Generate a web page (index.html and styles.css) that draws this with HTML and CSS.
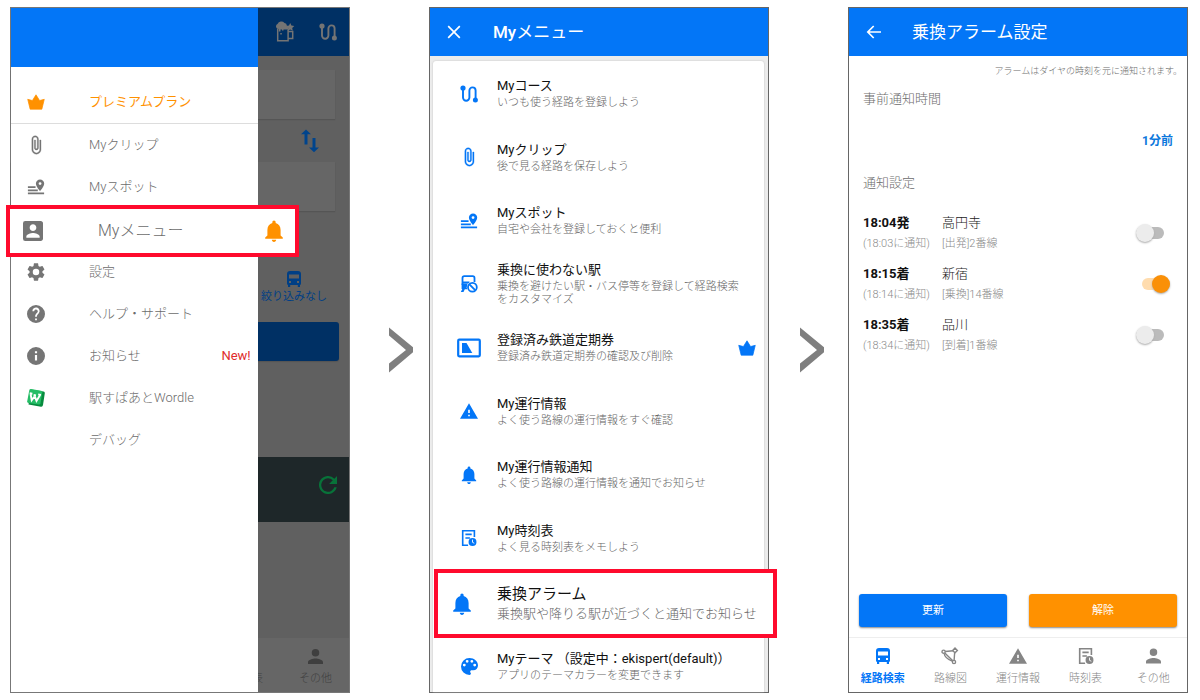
FILE: index.html
```html
<!DOCTYPE html>
<html lang="ja">
<head>
<meta charset="utf-8">
<meta name="viewport" content="width=device-width, initial-scale=1">
<title>乗換アラーム設定</title>
<link rel="stylesheet" href="styles.css">
</head>
<body>
<svg class="sprite" aria-hidden="true">
  <symbol id="crown" viewBox="0 0 20 20"><path d="M3.500 18h13l2.700-11-5.200 1.400L10 2 6 8.400.8 7z" stroke="currentColor" stroke-width=".8" stroke-linejoin="round"/></symbol>
  <symbol id="clip" viewBox="0 0 24 24"><path stroke="currentColor" stroke-width=".4" d="M16.500 6v11.500c0 2.210-1.790 4-4 4s-4-1.790-4-4V5c0-1.380 1.120-2.500 2.500-2.500s2.500 1.120 2.500 2.500v10.500c0 .55-.45 1-1 1s-1-.45-1-1V6H10v9.500c0 1.380 1.120 2.500 2.500 2.500s2.500-1.120 2.500-2.500V5c0-2.210-1.790-4-4-4S7 2.790 7 5v12.500c0 3.040 2.460 5.500 5.500 5.500s5.500-2.460 5.500-5.500V6h-1.500z"/></symbol>
  <symbol id="spot" viewBox="0 0 20 18"><path d="M1 15.200h18v1.900H1zM1 11.700h11v1.900H1zM1 8.200h8.500v1.900H1z"/><path fill-rule="evenodd" d="M14.500.6a4.600 4.600 0 0 1 4.600 4.600c0 3.300-4.600 8.500-4.600 8.500s-4.600-5.200-4.600-8.500A4.600 4.600 0 0 1 14.500.6zm0 3a1.600 1.600 0 1 0 0 3.200 1.600 1.600 0 0 0 0-3.200z"/></symbol>
  <symbol id="account" viewBox="3 3 18 18"><path d="M3 5v14a2 2 0 0 0 2 2h14c1.100 0 2-.9 2-2V5c0-1.100-.9-2-2-2H5a2 2 0 0 0-2 2zm12 4c0 1.660-1.340 3-3 3s-3-1.340-3-3 1.340-3 3-3 3 1.340 3 3zm-9 8c0-2 4-3.100 6-3.100s6 1.100 6 3.100v1H6v-1z"/></symbol>
  <symbol id="bell" viewBox="4 2 16 20"><path d="M12 22c1.100 0 2-.9 2-2h-4c0 1.100.89 2 2 2zm6-6v-5c0-3.070-1.640-5.640-4.500-6.320V4c0-.83-.67-1.500-1.500-1.500s-1.500.67-1.500 1.500v.68C7.630 5.360 6 7.920 6 11v5l-2 2v1h16v-1l-2-2z"/></symbol>
  <symbol id="gear" viewBox="2 2 20 20"><path d="M19.140 12.940c.04-.3.06-.61.06-.94s-.02-.64-.07-.94l2.030-1.580c.18-.14.23-.41.12-.61l-1.920-3.320c-.12-.22-.37-.29-.59-.22l-2.390.96c-.5-.38-1.030-.7-1.620-.94L14.400 2.810c-.04-.24-.24-.41-.48-.41h-3.840c-.24 0-.43.17-.47.41l-.36 2.540c-.59.24-1.130.57-1.620.94l-2.390-.96c-.22-.08-.47 0-.59.22L2.740 8.870c-.12.21-.08.47.12.61l2.030 1.580c-.05.3-.09.63-.09.94s.02.64.07.94l-2.030 1.580c-.18.14-.23.41-.12.61l1.920 3.320c.12.22.37.29.59.22l2.390-.96c.5.38 1.030.7 1.620.94l.36 2.540c.05.24.24.41.48.41h3.840c.24 0 .44-.17.47-.41l.36-2.540c.59-.24 1.130-.56 1.620-.94l2.390.96c.22.08.47 0 .59-.22l1.920-3.320c.12-.22.07-.47-.12-.61l-2.010-1.580zM12 15.600A3.600 3.600 0 1 1 12 8.400a3.600 3.600 0 0 1 0 7.200z"/></symbol>
  <symbol id="help" viewBox="2 2 20 20"><path d="M12 2a10 10 0 1 0 0 20 10 10 0 0 0 0-20zm1 17h-2v-2h2v2zm2.070-7.750l-.9.920C13.450 12.900 13 13.500 13 15h-2v-.5c0-1.100.45-2.100 1.170-2.830l1.240-1.260A2 2 0 1 0 10 9H8a4 4 0 1 1 7.070 2.250z"/></symbol>
  <symbol id="info" viewBox="2 2 20 20"><path d="M12 2a10 10 0 1 0 0 20 10 10 0 0 0 0-20zm1.200 15h-2.400v-6h2.400v6zm0-8h-2.400V6.800h2.400V9z"/></symbol>
  <symbol id="wordle" viewBox="0 0 20 20"><path fill="#078b3e" d="M5 1.500l12.500 2q1.500.3 1.300 1.800L17 17q-.4 2-2 1.700L2.500 16.500z"/><path fill="#25bd66" d="M5 1l10 1.700q1.500.3 1.300 1.800l-1.800 10.800q-.3 1.500-1.800 1.300L2.500 15Q1 14.700 1.200 13.200L3.300 2.300Q3.600.8 5 1z"/><path fill="none" stroke="#fff" stroke-width="1.900" d="M4.500 5.500l1.200 6.700 3-4 1.800 4.700 3.600-6M3.700 5.300l2.700.4M12.200 6.400l2.800.5M7.600 7l2.400.4"/></symbol>
  <symbol id="course" viewBox="0 0 18 18"><path fill="none" stroke="currentColor" stroke-width="1.900" d="M3 3v9.500a3.200 3.200 0 0 0 6.400 0v-7a3.100 3.100 0 0 1 6.200 0V15"/><circle cx="3" cy="3" r="2.600"/><circle cx="15.400" cy="15" r="2.500"/></symbol>
  <symbol id="mug" viewBox="0 0 20 22"><path fill="none" stroke="currentColor" stroke-width="1.500" d="M2.700 7.500v12.300h10.400V8.500M13.100 10.600h4.600v7h-4.600"/><path d="M2 7.500A2.700 2.700 0 0 1 2.500 3 4.200 4.200 0 0 1 9.500 2q2.300.3 2.300 2.600l1.200 1v3H8.500v1H7V8.500H5.500v2H3.800V8zM5.300 12h1.500v1.500H5.300z"/><path d="M15.200 2l1.200 2.500 2.900.4-2.100 2 .6 2.800-2.600-1.300-2.500 1.300.5-2.800-2.100-2 2.900-.4z"/></symbol>
  <symbol id="swap" viewBox="0 0 20 24"><path d="M4.500 15.500V5.300H1L6 .5l5 4.800H7.500v10.200zM12.500 9h3v9.500H19l-5 4.800-5-4.800h3.500z"/></symbol>
  <symbol id="bus" viewBox="0 0 16 18"><path fill-rule="evenodd" d="M4 1h8q3 0 3 3v9.500q0 1-1 1.500v2h-2.200v-2H4.200v2H2v-2q-1-.5-1-1.500V4q0-3 3-3zm-1 3.500v4h10v-4zM3 11v2h2v-2zm8 0v2h2v-2z"/></symbol>
  <symbol id="refresh" viewBox="4 4 16 16"><path d="M17.650 6.350A8 8 0 1 0 19.730 14h-2.080A6 6 0 1 1 12 6c1.660 0 3.140.69 4.220 1.780L13 11h7V4l-2.350 2.350z"/></symbol>
  <symbol id="person" viewBox="4 4 16 16"><path d="M12 12a4 4 0 1 0 0-8 4 4 0 0 0 0 8zm0 2c-2.670 0-8 1.340-8 4v2h16v-2c0-2.660-5.330-4-8-4z"/></symbol>
  <symbol id="avoid" viewBox="0 0 18 18"><path fill="none" stroke="currentColor" stroke-width="1.800" d="M2.500 10V3Q2.500 1.200 4.300 1.200h8.400q1.800 0 1.800 1.800V7M2.500 7.500h7"/><path d="M1.600 8.500h6v5.800H4.800L3.500 17H.8l1.500-3H1.600z"/><circle cx="12.400" cy="12.300" r="5.600" fill="#fff"/><circle cx="12.400" cy="12.300" r="4.400" fill="none" stroke="currentColor" stroke-width="1.800"/><path stroke="currentColor" stroke-width="1.800" d="M9.400 9.300l6 6"/></symbol>
  <symbol id="pass" viewBox="0 0 24 20"><rect x="1.200" y="1.700" width="21.600" height="16.600" rx="1" fill="none" stroke="currentColor" stroke-width="2.200"/><path d="M5 5h4.500l5.800 10H5z"/></symbol>
  <symbol id="warning" viewBox="1 2 22 19"><path d="M1 21h22L12 2 1 21zm12-3h-2v-2h2v2zm0-4h-2v-4h2v4z"/></symbol>
  <symbol id="timetable" viewBox="0 0 18 20"><path fill="none" stroke="currentColor" stroke-width="1.800" d="M8 18H2V1.900h13V9M5 6h7M5 10h5"/><circle cx="12.900" cy="14.500" r="4.400"/><path fill="none" stroke="#fff" stroke-width="1" d="M12.900 11.800v3l2 1"/></symbol>
  <symbol id="palette" viewBox="3 3 18 18"><path d="M12 3a9 9 0 0 0 0 18c.83 0 1.500-.67 1.500-1.500 0-.39-.15-.74-.39-1.010-.23-.26-.38-.61-.38-.99 0-.83.67-1.500 1.500-1.500H16a5 5 0 0 0 5-5c0-4.420-4.030-8-9-8zm-5.500 9a1.500 1.500 0 1 1 0-3 1.500 1.500 0 0 1 0 3zm3-4a1.500 1.500 0 1 1 0-3 1.500 1.500 0 0 1 0 3zm5 0a1.500 1.500 0 1 1 0-3 1.500 1.500 0 0 1 0 3zm3 4a1.500 1.500 0 1 1 0-3 1.500 1.500 0 0 1 0 3z"/></symbol>
  <symbol id="map" viewBox="0 0 18 18"><g fill="none" stroke="currentColor" stroke-width="1.400"><path d="M4.200 4.500l8-.8M3.800 6l8 7.800M13.700 5l-.6 8.500"/><circle cx="2.600" cy="4.700" r="1.600"/><path d="M14 1l2.400 2.400L14 5.800l-2.400-2.400z"/><circle cx="13" cy="15" r="1.600"/><path d="M3.200 6.500q.4 4.500 8 7.500"/></g></symbol>
  <symbol id="close" viewBox="0 0 14 14"><path fill="none" stroke="currentColor" stroke-width="1.700" d="M1.200 1.200l11.600 11.600M12.800 1.200L1.200 12.800"/></symbol>
  <symbol id="back" viewBox="0 0 16 14"><path fill="none" stroke="currentColor" stroke-width="1.700" d="M15 7H2M7.700 1L1.800 7l5.900 6"/></symbol>
  <symbol id="chevron" viewBox="0 0 24 46"><path fill="#7f7f7f" d="M0 .5l24 19.800v5L0 45.500v-9L17 23 0 8.500z"/></symbol>
</svg>

<main class="flow">
  <section class="phone home">
    <div class="backdrop">
      <header class="home-bar">
        <svg class="icon mug"><use href="#mug"/></svg>
        <svg class="icon small"><use href="#course"/></svg>
      </header>
      <div class="home-body">
        <div class="field"></div>
        <div class="swap-row"><svg class="icon swap"><use href="#swap"/></svg></div>
        <div class="field"></div>
        <div class="filter"><svg class="icon bus"><use href="#bus"/></svg><span>絞り込みなし</span></div>
        <div class="search"></div>
        <div class="banner"><svg class="icon small"><use href="#refresh"/></svg></div>
      </div>
      <div class="home-tabs"><span class="cut">時刻表</span><span class="other"><svg class="icon person"><use href="#person"/></svg>その他</span></div>
    </div>
    <nav class="drawer">
      <div class="drawer-head"></div>
      <a href="#" class="drawer-item premium"><svg class="icon small"><use href="#crown"/></svg><span>プレミアムプラン</span></a>
      <a href="#" class="drawer-item"><svg class="icon tall"><use href="#clip"/></svg><span>Myクリップ</span></a>
      <a href="#" class="drawer-item"><svg class="icon small"><use href="#spot"/></svg><span>Myスポット</span></a>
      <a href="#" class="drawer-item focus"><svg class="icon medium"><use href="#account"/></svg><span>Myメニュー</span><svg class="icon alert"><use href="#bell"/></svg></a>
      <a href="#" class="drawer-item"><svg class="icon small"><use href="#gear"/></svg><span>設定</span></a>
      <a href="#" class="drawer-item"><svg class="icon small"><use href="#help"/></svg><span>ヘルプ・サポート</span></a>
      <a href="#" class="drawer-item"><svg class="icon small"><use href="#info"/></svg><span>お知らせ</span><em>New!</em></a>
      <a href="#" class="drawer-item"><svg class="icon medium"><use href="#wordle"/></svg><span>駅すぱあとWordle</span></a>
      <a href="#" class="drawer-item"><i></i><span>デバッグ</span></a>
    </nav>
  </section>

  <svg class="chevron" aria-hidden="true"><use href="#chevron"/></svg>

  <section class="phone menu">
    <header class="bar"><button type="button" aria-label="閉じる"><svg class="icon close"><use href="#close"/></svg></button><h1><b>My</b>メニュー</h1></header>
    <div class="card">
      <a href="#" class="entry"><svg class="icon small"><use href="#course"/></svg><span class="label"><b>Myコース</b><small>いつも使う経路を登録しよう</small></span></a>
      <a href="#" class="entry"><svg class="icon tall"><use href="#clip"/></svg><span class="label"><b>Myクリップ</b><small>後で見る経路を保存しよう</small></span></a>
      <a href="#" class="entry"><svg class="icon small"><use href="#spot"/></svg><span class="label"><b>Myスポット</b><small>自宅や会社を登録しておくと便利</small></span></a>
      <a href="#" class="entry"><svg class="icon small"><use href="#avoid"/></svg><span class="label"><b>乗換に使わない駅</b><small>乗換を避けたい駅・バス停等を登録して経路検索をカスタマイズ</small></span></a>
      <a href="#" class="entry"><svg class="icon pass"><use href="#pass"/></svg><span class="label"><b>登録済み鉄道定期券</b><small>登録済み鉄道定期券の確認及び削除</small></span><svg class="icon small"><use href="#crown"/></svg></a>
      <a href="#" class="entry"><svg class="icon small"><use href="#warning"/></svg><span class="label"><b>My運行情報</b><small>よく使う路線の運行情報をすぐ確認</small></span></a>
      <a href="#" class="entry"><svg class="icon small"><use href="#bell"/></svg><span class="label"><b>My運行情報通知</b><small>よく使う路線の運行情報を通知でお知らせ</small></span></a>
      <a href="#" class="entry"><svg class="icon small"><use href="#timetable"/></svg><span class="label"><b>My時刻表</b><small>よく見る時刻表をメモしよう</small></span></a>
      <a href="#" class="entry focus"><svg class="icon alert"><use href="#bell"/></svg><span class="label"><b>乗換アラーム</b><small>乗換駅や降りる駅が近づくと通知でお知らせ</small></span></a>
      <a href="#" class="entry last"><svg class="icon palette"><use href="#palette"/></svg><span class="label"><b>Myテーマ （設定中：ekispert(default)）</b><small>アプリのテーマカラーを変更できます</small></span></a>
    </div>
  </section>

  <svg class="chevron" aria-hidden="true"><use href="#chevron"/></svg>

  <section class="phone settings">
    <header class="bar"><button type="button" aria-label="戻る"><svg class="icon back"><use href="#back"/></svg></button><h1>乗換アラーム設定</h1></header>
    <div class="settings-body">
      <p class="note">アラームはダイヤの時刻を元に通知されます。</p>
      <h2>事前通知時間</h2>
      <button type="button" class="lead-time">1分前</button>
      <h2>通知設定</h2>
      <label class="alarm"><span class="time"><b>18:04発</b><small>(18:03に通知)</small></span><span class="station">高円寺<small>[出発]2番線</small></span><input type="checkbox"></label>
      <label class="alarm"><span class="time"><b>18:15着</b><small>(18:14に通知)</small></span><span class="station">新宿<small>[乗換]14番線</small></span><input type="checkbox" checked></label>
      <label class="alarm"><span class="time"><b>18:35着</b><small>(18:34に通知)</small></span><span class="station">品川<small>[到着]1番線</small></span><input type="checkbox"></label>
    </div>
    <div class="actions"><button type="button" class="update">更新</button><button type="button" class="cancel">解除</button></div>
    <nav class="tabs">
      <a href="#" class="active"><svg class="icon tab-icon"><use href="#bus"/></svg>経路検索</a>
      <a href="#"><svg class="icon tab-icon"><use href="#map"/></svg>路線図</a>
      <a href="#"><svg class="icon tab-icon"><use href="#warning"/></svg>運行情報</a>
      <a href="#"><svg class="icon tab-icon"><use href="#timetable"/></svg>時刻表</a>
      <a href="#"><svg class="icon tab-icon person"><use href="#person"/></svg>その他</a>
    </nav>
  </section>
</main>
</body>
</html>
```
FILE: styles.css
```css
* { box-sizing: border-box; }
body { margin: 0; background: #fff; color: #6c6c6c; font: 13px/16px Roboto, "Noto Sans CJK JP", sans-serif; font-weight: 300; }
a { color: inherit; text-decoration: none; }
button { border: 0; padding: 0; background: none; color: inherit; font: inherit; }
h1, h2, p { margin: 0; font-weight: inherit; }
small { font-size: 11px; }
.sprite { position: absolute; width: 0; height: 0; }
.icon { display: block; flex: none; fill: currentColor; }
.small { width: 18px; height: 18px; }
.medium { width: 20px; height: 20px; }
.tall { width: 20px; height: 20px; }
.alert { width: 20px; height: 22px; }

.flow { display: grid; grid-template-columns: minmax(0, 1fr) 79px minmax(0, 1fr) 79px minmax(0, 1fr); min-height: 100vh; padding: 7px 12px 7px 10px; }
.phone { display: flex; flex-direction: column; border: 1px solid #666; background: #fff; }
.chevron { width: 24px; height: 46px; margin-right: 16px; align-self: center; justify-self: end; }
.menu + .chevron { margin-right: 24px; }

.home { display: grid; border-color: #777; }
.home > * { grid-area: 1 / 1; }
.backdrop { display: flex; flex-direction: column; background: #606060; color: #003f85; }
.home-bar { display: flex; justify-content: flex-end; align-items: center; gap: 24px; height: 48px; padding-right: 12px; background: #003064; color: #747474; }
.mug { width: 20px; height: 22px; }
.home-body { flex: 1; padding-top: 14px; }
.field { height: 49px; margin-right: 14px; background: #666; box-shadow: 0 1px 1px #555; }
.swap-row { display: flex; justify-content: flex-end; align-items: center; height: 43px; padding-right: 29px; color: #00448c; }
.swap { width: 20px; height: 24px; }
.filter { display: flex; flex-direction: column; align-items: center; gap: 1px; width: 68px; margin: 59px 21px 0 auto; font-size: 11px; font-weight: 400; }
.filter span { white-space: nowrap; }
.bus { width: 16px; height: 18px; }
.search { height: 39px; margin: 17px 10px 96px 0; border-radius: 3px; background: #003064; box-shadow: 0 1px 1px #555; }
.banner { display: flex; justify-content: flex-end; align-items: flex-start; height: 65px; padding: 19px 12px; background: #1e2729; color: #087239; }
.home-tabs { display: flex; justify-content: flex-end; align-items: flex-end; gap: 36px; height: 54px; padding: 0 17px 5px 0; background: #666; color: #3f3f3f; font-size: 11px; }
.other { display: flex; flex-direction: column; align-items: center; gap: 7px; }
.person { width: 15px; height: 15px; }

.drawer { z-index: 1; width: 73%; background: #fff; }
.drawer-head { height: 59px; background: #0376f7; }
.drawer-item { display: grid; grid-template-columns: 50px 1fr auto; align-items: center; column-gap: 28px; height: 42px; padding-right: 7px; }
.drawer-item > .icon:first-child { justify-self: center; color: #757575; }
.premium { height: 57px; padding-top: 14px; border-bottom: 1px solid #ddd; color: #ff9100; font-weight: 400; }
.premium > .icon:first-child { color: #ff9100; }
.drawer-item em { color: #e02b2b; font-style: normal; font-weight: 400; }
.drawer-item.focus { width: calc(100% + 46px); height: 52px; margin: -3px -41px -6px -5px; padding: 0 11px 0 0; grid-template-columns: 46px 1fr auto; column-gap: 42px; border: 4px solid #ff0a2d; background: #fff; font-size: 16px; }
.focus .alert { color: #ff9100; }

.bar { display: flex; align-items: center; height: 48px; padding-left: 17px; background: #0376f7; color: #fff; }
.bar button { width: 46px; }
.bar h1 { font-size: 17px; line-height: 24px; font-weight: 400; }
.bar h1 b { font-weight: 500; }
.close { width: 14px; height: 14px; }
.back { width: 16px; height: 14px; }

.menu { background: #ececec; }
.card { display: flex; flex: 1; flex-direction: column; margin: 5px 4px 0 3px; border-radius: 3px 3px 0 0; background: #fff; box-shadow: 0 0 2px #bbb; color: #0376f7; }
.entry { display: grid; flex: 1 0 63px; grid-template-columns: 24px minmax(0, 1fr) auto; align-items: center; column-gap: 16px; padding: 2px 8px 0 24px; }
.entry > :first-child { justify-self: center; }
.label { display: grid; row-gap: 2px; color: #111; }
.label b { font-weight: 400; }
.label small { max-width: 248px; color: #666; line-height: 13px; }
.pass { width: 24px; height: 20px; }
.palette { width: 17px; height: 17px; }
.entry.focus { position: relative; flex: none; min-height: 69px; grid-template-columns: 24px minmax(0, 1fr); margin: 0 -13px 0 1px; padding: 0 0 0 12px; column-gap: 23px; border: 4px solid #ff0a2d; background: #fff; }
.entry.focus .alert { color: #0376f7; }
.entry.focus b { font-size: 15px; line-height: 18px; }
.entry.focus small { max-width: none; font-size: 13px; line-height: 18px; }
.entry.last { flex: none; min-height: 54px; }

.settings-body { flex: 1; padding: 8px 14px 0; }
.note { margin-right: -9px; font-size: 9px; line-height: 14px; text-align: right; }
h2 { margin-top: 13px; font-size: 13px; line-height: 16px; }
.lead-time { display: block; margin: 26px 0 26px auto; color: #0b78dc; font-size: 12px; font-weight: 700; }
.alarm { display: grid; grid-template-columns: 79px 1fr auto; align-items: center; height: 51px; color: #222; }
h2 + .alarm { margin-top: 16px; }
.time, .station { display: grid; row-gap: 5px; padding-top: 2px; }
.time b { color: #111; font-weight: 700; }
.alarm small { color: #8a8a8a; }
input { appearance: none; display: flex; align-items: center; width: 28px; height: 12px; margin: 0 9px 0 0; border-radius: 6px; background: #bbb; }
input::before { content: ""; width: 18px; height: 18px; border-radius: 50%; background: #ececec; box-shadow: 0 1px 2px #aaa; }
input:checked { justify-content: flex-end; margin-right: 3px; background: #ffdcae; }
input:checked::before { background: #fa9008; }
.actions { display: grid; grid-template-columns: 1fr 1fr; gap: 22px; padding: 0 10px 10px; }
.actions button { height: 33px; border-radius: 3px; color: #fff; font-size: 11px; font-weight: 400; box-shadow: 0 1px 2px #888; }
.actions .update { background: #0376f7; }
.actions .cancel { background: #ff9100; }
.tabs { display: grid; grid-template-columns: repeat(5, 1fr); height: 55px; border-top: 1px solid #eee; color: #858585; font-size: 11px; }
.tabs a { display: flex; flex-direction: column; align-items: center; gap: 6px; padding-top: 9px; white-space: nowrap; }
.tab-icon { height: 18px; width: 18px; }
.tab-icon.person { width: 15px; }
.tabs .active { color: #0376f7; font-weight: 700; }
```
